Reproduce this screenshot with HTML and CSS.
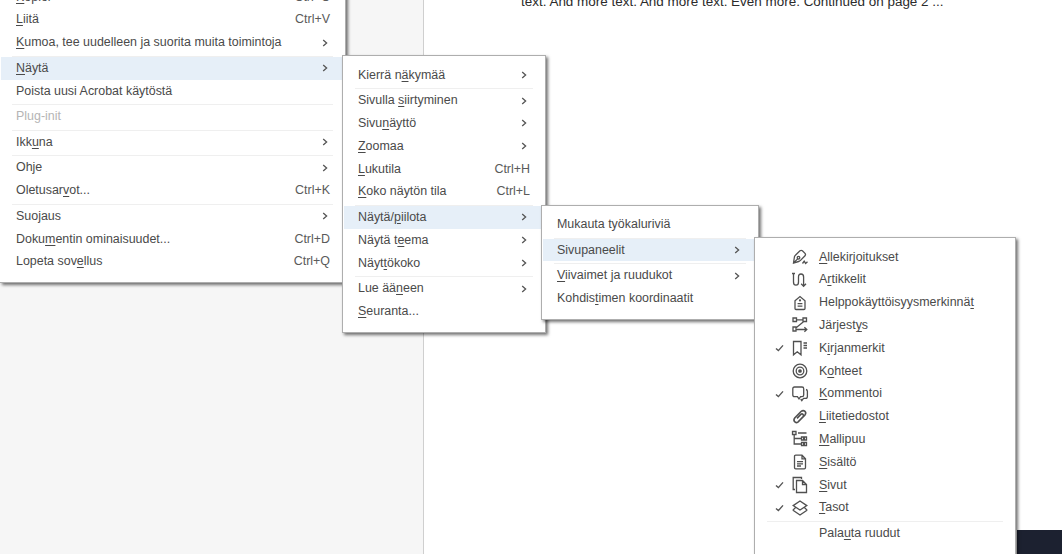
FILE: index.html
```html
<!DOCTYPE html>
<html lang="fi">
<head>
<meta charset="utf-8">
<title>Näytä</title>
<link rel="stylesheet" href="styles.css">
</head>
<body>
<svg class="defs" width="0" height="0" aria-hidden="true">
<symbol id="chev" viewBox="0 0 6 8"><path d="M1.2 1 L4.6 4 L1.2 7" fill="none" stroke="#555" stroke-width="1.3"/></symbol>
<symbol id="chk" viewBox="0 0 9 8"><path d="M1 4.4 L3.4 6.6 L8 1.4" fill="none" stroke="#555" stroke-width="1.4"/></symbol>
</svg>
<div class="app">
  <aside class="side"></aside>
  <main class="doc">
    <p class="doctext">text. And more text. And more text. Even more. Continued on page 2 ...</p>
  </main>
</div>
<div class="darkbar"></div>

<nav class="menu m1">
  <div class="item"><span class="label"><u>K</u>opioi</span><span class="key">Ctrl+C</span></div>
  <div class="item"><span class="label"><u>L</u>iitä</span><span class="key">Ctrl+V</span></div>
  <div class="item"><span class="label"><u>K</u>umoa, tee uudelleen ja suorita muita toimintoja</span><svg class="chev"><use href="#chev"/></svg></div>
  <div class="sep"></div>
  <div class="item on"><span class="label"><u>N</u>äytä</span><svg class="chev"><use href="#chev"/></svg></div>
  <div class="item"><span class="label">Poista uusi Acrobat käytöstä</span></div>
  <div class="sep"></div>
  <div class="item off"><span class="label">Plug-init</span></div>
  <div class="sep"></div>
  <div class="item"><span class="label">Ikk<u>u</u>na</span><svg class="chev"><use href="#chev"/></svg></div>
  <div class="sep"></div>
  <div class="item"><span class="label">Ohje</span><svg class="chev"><use href="#chev"/></svg></div>
  <div class="item"><span class="label">Oletusar<u>v</u>ot...</span><span class="key">Ctrl+K</span></div>
  <div class="sep"></div>
  <div class="item"><span class="label">Suojaus</span><svg class="chev"><use href="#chev"/></svg></div>
  <div class="item"><span class="label">Doku<u>m</u>entin ominaisuudet...</span><span class="key">Ctrl+D</span></div>
  <div class="item"><span class="label">Lopeta sov<u>e</u>llus</span><span class="key">Ctrl+Q</span></div>
</nav>

<nav class="menu m2">
  <div class="item"><span class="label">Kierrä n<u>ä</u>kymää</span><svg class="chev"><use href="#chev"/></svg></div>
  <div class="sep"></div>
  <div class="item"><span class="label">Sivulla <u>s</u>iirtyminen</span><svg class="chev"><use href="#chev"/></svg></div>
  <div class="item"><span class="label">Sivu<u>n</u>äyttö</span><svg class="chev"><use href="#chev"/></svg></div>
  <div class="item"><span class="label"><u>Z</u>oomaa</span><svg class="chev"><use href="#chev"/></svg></div>
  <div class="item"><span class="label"><u>L</u>ukutila</span><span class="key">Ctrl+H</span></div>
  <div class="item"><span class="label"><u>K</u>oko näytön tila</span><span class="key">Ctrl+L</span></div>
  <div class="sep"></div>
  <div class="item on"><span class="label">Näytä/<u>p</u>iilota</span><svg class="chev"><use href="#chev"/></svg></div>
  <div class="item"><span class="label">Näytä t<u>e</u>ema</span><svg class="chev"><use href="#chev"/></svg></div>
  <div class="item"><span class="label">Näyt<u>t</u>ökoko</span><svg class="chev"><use href="#chev"/></svg></div>
  <div class="sep"></div>
  <div class="item"><span class="label">Lue ää<u>n</u>een</span><svg class="chev"><use href="#chev"/></svg></div>
  <div class="item"><span class="label"><u>S</u>euranta...</span></div>
</nav>

<nav class="menu m3">
  <div class="item"><span class="label">Mukauta työkaluriviä</span></div>
  <div class="sep"></div>
  <div class="item on"><span class="label">Sivupaneelit</span><svg class="chev"><use href="#chev"/></svg></div>
  <div class="sep"></div>
  <div class="item"><span class="label"><u>V</u>iivaimet ja ruudukot</span><svg class="chev"><use href="#chev"/></svg></div>
  <div class="item"><span class="label">Kohdis<u>t</u>imen koordinaatit</span></div>
</nav>

<nav class="menu m4">
  <div class="item"><span class="check"></span>
    <svg class="ico" viewBox="0 0 18 18"><path d="M2.5 15 L3.4 9 Q3.6 8 4.4 7.3 L9 2.8 Q10.2 1.8 11.4 2.8 L14 5.4 Q15 6.6 14 7.8 L9.5 12.4 Q8.7 13.2 7.6 13.5 Z M2.5 15 L6.6 10.9 M11.5 15.5 L13.2 13.2 L14.6 15.4 L16.5 13.8"/><circle cx="7.5" cy="9.7" r="1.3"/></svg>
    <span class="label"><u>A</u>llekirjoitukset</span></div>
  <div class="item"><span class="check"></span>
    <svg class="ico" viewBox="0 0 18 18"><path d="M2.5 2.5 V11 Q2.5 14.2 5 14.2 Q7.5 14.2 7.5 11 V6 Q7.5 3 10 3 Q12.6 3 12.6 6 V15 M10.2 12.8 L12.6 15.4 L15 12.8 M1 2.5 H4 M6 14.2 H4"/></svg>
    <span class="label">A<u>r</u>tikkelit</span></div>
  <div class="item"><span class="check"></span>
    <svg class="ico" viewBox="0 0 18 18"><path d="M4 6.8 L9 2.6 L14 6.8 V14.4 Q14 15.5 13 15.5 H5 Q4 15.5 4 14.4 Z M6.6 9.6 H11.4 M6.6 12.2 H11.4"/><circle cx="9" cy="6.4" r=".5"/></svg>
    <span class="label">Helppokäyttöisyysmerkinnä<u>t</u></span></div>
  <div class="item"><span class="check"></span>
    <svg class="ico" viewBox="0 0 18 18"><path d="M2 2 H5.5 V5.5 H2 Z M12 2 H15.5 V5.5 H12 Z M5.5 3.8 H12 M12.8 5.5 L4.8 12 M2 11 H5 V15 H2 Z M5 13.5 H15.5 M13.4 11.3 L15.8 13.5 L13.4 15.7"/></svg>
    <span class="label">Järjest<u>y</u>s</span></div>
  <div class="item"><span class="check"><svg class="chk"><use href="#chk"/></svg></span>
    <svg class="ico" viewBox="0 0 18 18"><path d="M2.5 2.5 H10 V15.8 L6.25 12.8 L2.5 15.8 Z M12.5 4 H16 M12.5 6.5 H16 M12.5 9 H16"/></svg>
    <span class="label">K<u>i</u>rjanmerkit</span></div>
  <div class="item"><span class="check"></span>
    <svg class="ico" viewBox="0 0 18 18"><circle cx="9" cy="9" r="6.8"/><circle cx="9" cy="9" r="3.8"/><circle cx="9" cy="9" r="1.2" class="dot"/></svg>
    <span class="label">K<u>o</u>hteet</span></div>
  <div class="item"><span class="check"><svg class="chk"><use href="#chk"/></svg></span>
    <svg class="ico" viewBox="0 0 18 18"><path d="M3.5 2 H11 Q12.7 2 12.7 3.7 V10 Q12.7 11.6 11 11.6 H9.6 L8 13.8 L6.4 11.6 H3.5 Q1.8 11.6 1.8 10 V3.7 Q1.8 2 3.5 2 Z M15 4.5 Q16.4 4.8 16.4 6.3 V11.5 Q16.4 13.4 14.5 13.4 H12.5 L10.8 15.6 L9.7 14.2"/></svg>
    <span class="label"><u>K</u>ommentoi</span></div>
  <div class="item"><span class="check"></span>
    <svg class="ico thick" viewBox="0 0 18 18"><path d="M6.8 14.2 L13.8 7.2 Q15.6 5 14 3.3 Q12.2 1.7 10 3.5 L3.9 9.7 Q2.2 11.8 3.5 13.6 Q5 15.4 7.2 13.8 L12 8.8 Q13.1 7.4 12 6.3 Q11 5.4 9.8 6.4 L6 10.4"/></svg>
    <span class="label"><u>L</u>iitetiedostot</span></div>
  <div class="item"><span class="check"></span>
    <svg class="ico" viewBox="0 0 18 18"><path d="M1.5 1.5 H5 V4.5 H1.5 Z M3.2 4.5 V14 H10.5 M3.2 8.5 H10.5 M10.5 7 H15.5 V10 H10.5 Z M10.5 12.5 H15.5 V15.5 H10.5 Z M7 3 H15.5 M12 8.5 H14 M12 14 H14"/></svg>
    <span class="label"><u>M</u>allipuu</span></div>
  <div class="item"><span class="check"></span>
    <svg class="ico" viewBox="0 0 18 18"><path d="M3.5 3.4 Q3.5 2.2 4.7 2.2 H11 L14.5 5.8 V14.6 Q14.5 15.8 13.3 15.8 H4.7 Q3.5 15.8 3.5 14.6 Z M11 2.2 V5.8 H14.5 M6 8.6 H12 M6 10.8 H12 M6 13 H10"/></svg>
    <span class="label"><u>S</u>isältö</span></div>
  <div class="item"><span class="check"><svg class="chk"><use href="#chk"/></svg></span>
    <svg class="ico" viewBox="0 0 18 18"><path d="M4 13.5 H2.2 V1.5 H10.5 V3 M5.5 4.5 H11.5 L15.5 8.5 V16.5 H5.5 Z M11.5 4.5 V8.5 H15.5"/></svg>
    <span class="label"><u>S</u>ivut</span></div>
  <div class="item"><span class="check"><svg class="chk"><use href="#chk"/></svg></span>
    <svg class="ico" viewBox="0 0 18 18"><path d="M9 2 L15.8 6.6 L9 11 L2.2 6.6 Z M4.4 8.8 L2.2 10.8 Q2 11.2 2.4 11.6 L9 16 L15.6 11.6 Q16 11.2 15.8 10.8 L13.6 8.8"/></svg>
    <span class="label"><u>T</u>asot</span></div>
  <div class="sep"></div>
  <div class="item"><span class="check"></span><span class="icogap"></span><span class="label">Pala<u>u</u>ta ruudut</span></div>
</nav>
</body>
</html>
```
FILE: styles.css
```css
* { box-sizing: border-box; }
html, body { margin: 0; height: 100%; overflow: hidden; background: #fff; }
body { position: relative; width: 1062px; height: 554px; font-family: "Liberation Sans", Arial, sans-serif; }
.defs { position: absolute; }
.app { display: flex; height: 100%; }
.side { width: 424px; background: #f6f6f6; border-right: 1px solid #cfcfcf; }
.doc { flex: 1; padding-left: 97px; }
.doctext { margin: -7px 0 0; font-size: 13.46px; line-height: 18px; color: #2b2b2b; white-space: nowrap; }
.darkbar { position: absolute; left: 1017px; top: 530px; width: 45px; height: 24px; background: #1c2130; }

.menu { position: absolute; background: #fff; border: 1px solid #aeaeae; padding: 7.6px 1px 10px; box-shadow: 2px 2px 3px rgba(0,0,0,.55); font-size: 12.45px; color: #4a4a4a; }
.m1 { left: 0; top: -23px; width: 346px; height: 306px; z-index: 1; border-left: 0; }
.m2 { left: 342px; top: 55px; width: 204px; height: 278px; z-index: 2; }
.m3 { left: 541px; top: 205px; width: 218px; height: 115px; padding-top: 7px; z-index: 3; }
.m4 { left: 754px; top: 237px; width: 262px; height: 330px; z-index: 4; }

.item { display: flex; align-items: center; height: 22.8px; padding: 0 14px; line-height: 22.8px; white-space: nowrap; }
.m1 .item { padding: 0 14px 0 15px; }
.item.on { background: #e6eff8; }
.item.off { color: #b5b5b5; }
.label { flex: 1; }
.label u { text-underline-offset: 2px; text-decoration-thickness: 1px; }
.key { color: #5a5a5a; }
.chev { width: 6px; height: 8px; margin-right: 3px; flex: none; }
.m1 .chev { margin-right: 2px; }
.sep { height: 2.8px; margin: 0 11px; border-bottom: 1px solid #efefef; }

.check { width: 21px; height: 18px; flex: none; display: flex; align-items: center; padding-left: 5px; }
.chk { width: 9px; height: 8px; }
.ico { width: 18px; height: 18px; flex: none; margin-right: 10px; fill: none; stroke: #505050; stroke-width: 1.3; }
.ico.thick { stroke-width: 1.6; }
.ico .dot { fill: #505050; }
.icogap { width: 28px; flex: none; }
```
